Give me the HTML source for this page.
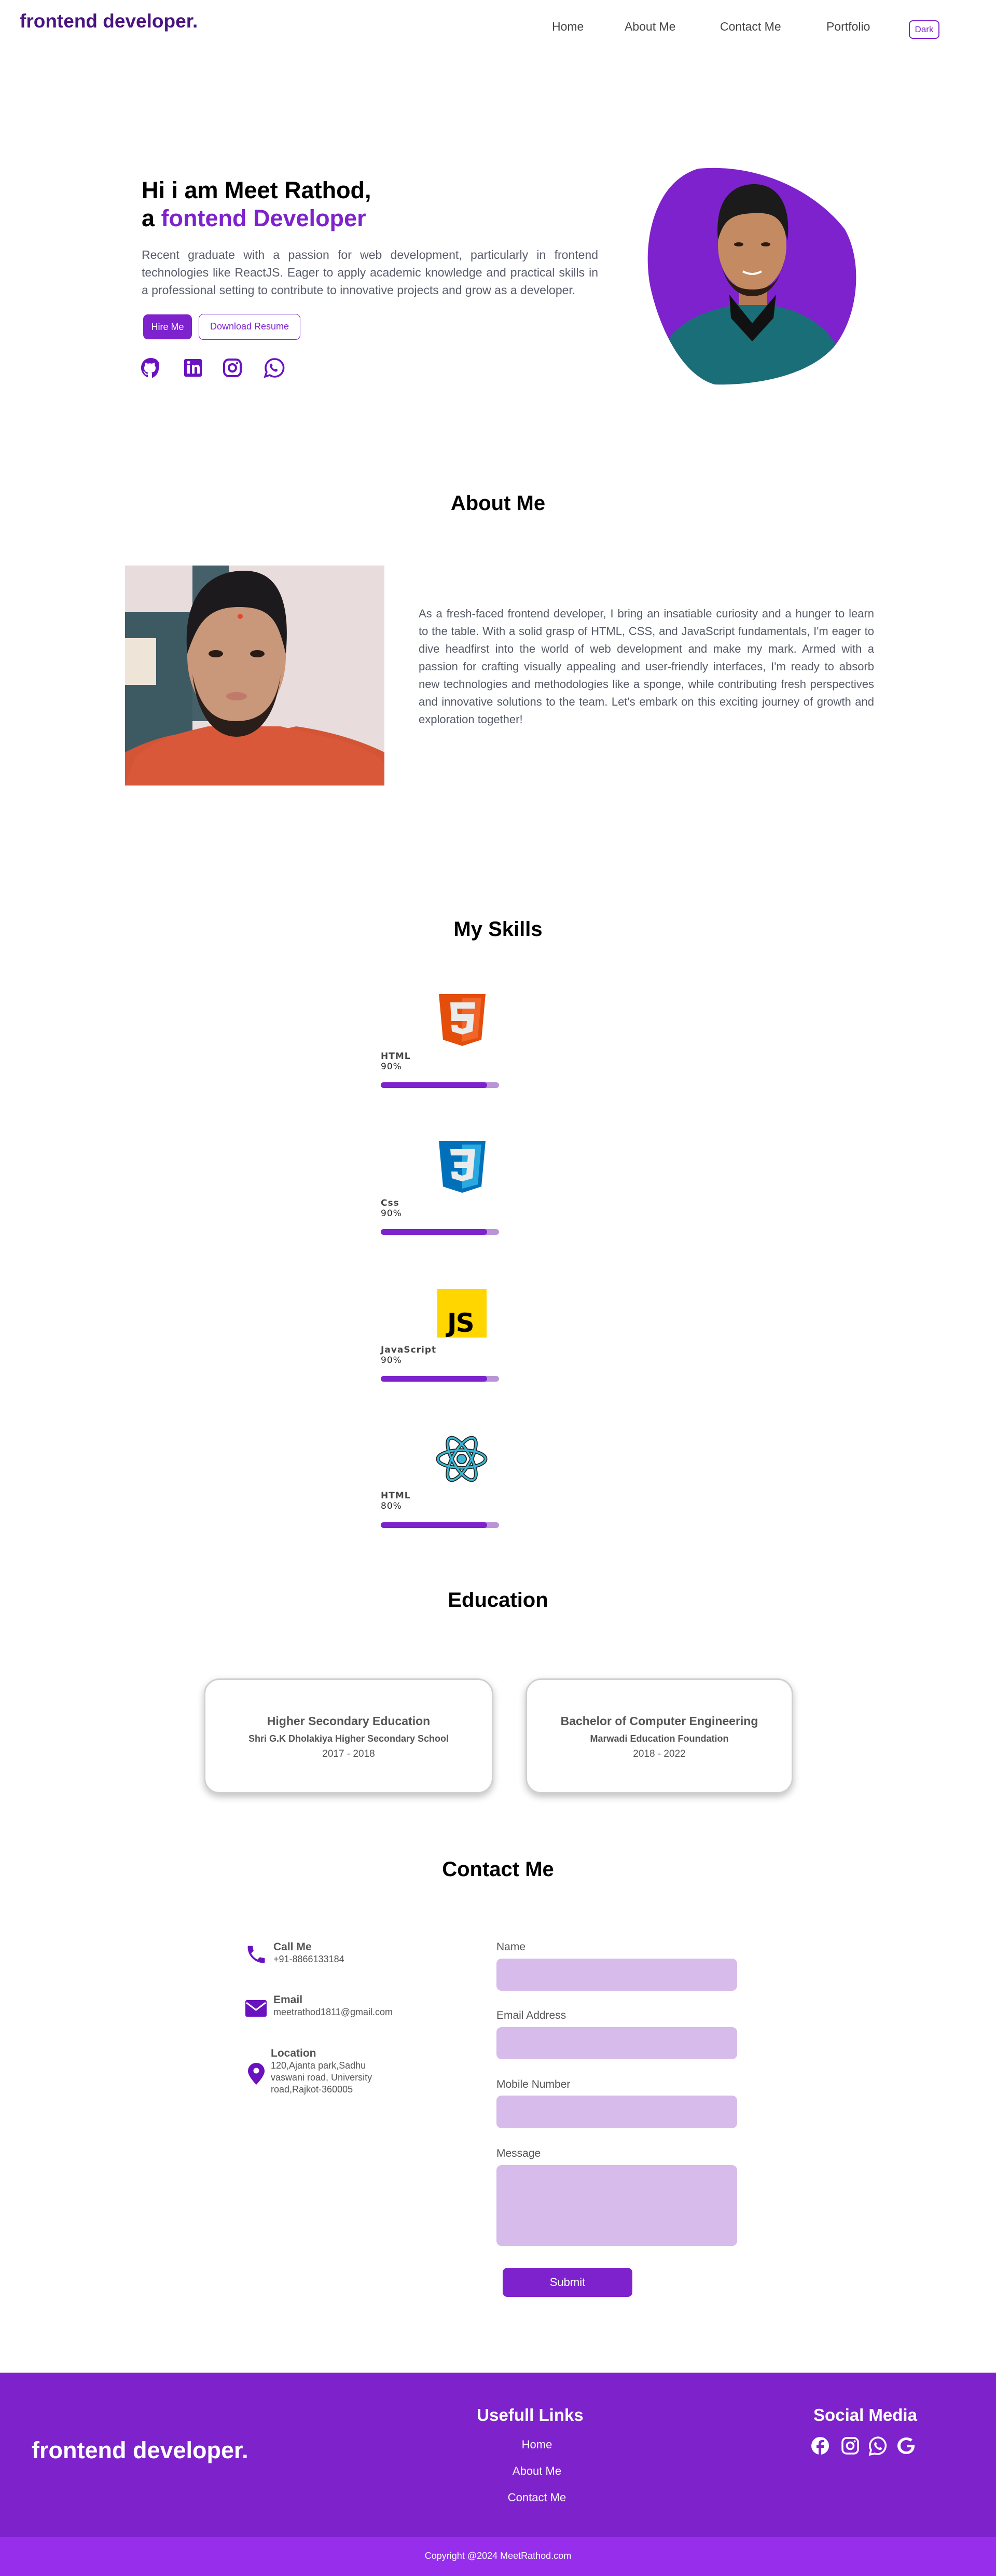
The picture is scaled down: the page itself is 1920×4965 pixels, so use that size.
<!DOCTYPE html>
<html><head><meta charset="utf-8"><style>
*{margin:0;padding:0;box-sizing:border-box}
body{width:1920px;height:4965px;position:relative;background:#fff;font-family:"Liberation Sans",Arial,sans-serif;overflow:hidden}
.a{position:absolute}
.nav{font-size:23px;color:#444;top:38px}
h2{position:absolute;left:0;width:1920px;text-align:center;font-size:40px;font-weight:bold;color:#000}
.sk{position:absolute;left:734px;font-family:"DejaVu Sans",sans-serif;color:#444}
.sk b{display:block;font-size:17px;letter-spacing:1px}
.sk span{display:block;font-size:17px;color:#222;letter-spacing:1px}
.bar{position:absolute;left:734px;width:228px;height:11px;border-radius:6px;background:#b995d8}
.bar i{display:block;width:205px;height:11px;border-radius:6px;background:#7e22ce}
.card{position:absolute;top:3235px;height:222px;border:3px solid #d0d0d0;border-radius:30px;box-shadow:0 6px 14px rgba(0,0,0,.25);text-align:center;color:#555;padding-top:66px}
.card .t{font-size:23px;font-weight:bold}
.card .s{font-size:18px;font-weight:bold;margin-top:10px}
.card .y{font-size:19px;margin-top:8px}
.lbl{position:absolute;left:957px;font-size:21px;color:#555}
.inp{position:absolute;left:957px;width:464px;background:#d7bbea;border-radius:10px}
.ct{position:absolute;left:527px;color:#555}
.ct b{display:block;font-size:21px}
.ct span{display:block;font-size:18px;line-height:23px}
.fl{position:absolute;width:300px;left:885px;text-align:center;color:#fff;font-size:22px}
</style></head><body>

<div class="a" style="left:38px;top:20px;font-size:37px;font-weight:bold;color:#4a1480">frontend developer.</div>
<div class="a nav" style="left:1064px">Home</div>
<div class="a nav" style="left:1204px">About Me</div>
<div class="a nav" style="left:1388px">Contact Me</div>
<div class="a nav" style="left:1593px">Portfolio</div>
<div class="a" style="left:1752px;top:39px;width:59px;height:36px;border:2px solid #7e22ce;border-radius:8px;color:#7e22ce;font-size:17px;text-align:center;line-height:32px">Dark</div>

<div class="a" style="left:273px;top:340px;font-size:45px;font-weight:bold;color:#000;line-height:54px">Hi i am Meet Rathod,<br>a <span style="color:#7e22ce">fontend Developer</span></div>
<div class="a" style="left:273px;top:474px;width:880px;font-size:23px;line-height:34px;color:#5a5d6a;text-align:justify;text-align-last:left">Recent graduate with a passion for web development, particularly in frontend technologies like ReactJS. Eager to apply academic knowledge and practical skills in a professional setting to contribute to innovative projects and grow as a developer.</div>
<div class="a" style="left:276px;top:606px;width:94px;height:48px;background:#7e22ce;border-radius:9px;color:#fff;font-size:18px;text-align:center;line-height:48px">Hire Me</div>
<div class="a" style="left:383px;top:605px;width:196px;height:50px;border:1.5px solid #7e22ce;border-radius:9px;color:#7e22ce;font-size:18px;text-align:center;line-height:47px">Download Resume</div>
<svg class="a" style="left:270px;top:688px" width="280" height="42" viewBox="0 0 280 42" fill="#6a12c0">
<path d="M21 2C10 2 2 10 2 21c0 8 5 15 12 18 1 0 1-.4 1-1v-4c-5 1-6-2-6-2-1-2-2-3-2-3-2-1 0-1 0-1 2 0 3 2 3 2 2 3 4 2 5 2 0-1 1-2 1-2-4-1-8-2-8-9 0-2 1-4 2-5 0-1-1-2 0-5 0 0 2 0 5 2 1-.4 3-.6 4-.6s3 .2 4 .6c3-2 5-2 5-2 1 3 0 4 0 5 1 1 2 3 2 5 0 7-4 8-8 9 1 1 1 2 1 3v6c0 1 0 1 1 1 7-3 12-10 12-18C40 10 32 2 21 2z"/>
<rect x="85" y="4" width="34" height="34" rx="3"/><rect x="91" y="16" width="5" height="16" fill="#fff"/><circle cx="93.5" cy="10.5" r="3" fill="#fff"/><path d="M100 16h5v2c1-2 3-3 5-3 4 0 5 3 5 6v11h-5V22c0-2-1-3-2-3-2 0-3 1-3 3v10h-5z" fill="#fff"/>
<rect x="162" y="5" width="32" height="32" rx="9" fill="none" stroke="#6a12c0" stroke-width="4"/><circle cx="178" cy="21" r="7" fill="none" stroke="#6a12c0" stroke-width="4"/><circle cx="187" cy="12" r="2"/>
<path d="M259 4a17 17 0 0 0-15 25l-3 9 9-3a17 17 0 1 0 9-31z" fill="none" stroke="#6a12c0" stroke-width="3.5"/><path d="M252 13c1-1 2 0 3 2s0 2-1 3c1 3 3 5 6 6 1-1 2-2 3-1s3 2 2 3c-1 2-3 3-5 2-5-2-8-5-10-10 0-2 1-4 2-5z"/>
</svg>

<svg class="a" style="left:1234px;top:323px" width="421" height="420" viewBox="0 0 417 420">
<defs><clipPath id="bl"><path d="M110 2C220-8 330 40 392 118C428 180 420 285 372 345C322 402 220 420 142 418C84 402 40 322 20 240C0 160 18 30 110 2Z"/></clipPath></defs>
<g clip-path="url(#bl)">
<rect width="417" height="420" fill="#7e22ce"/>
<path d="M20 420C30 330 80 290 150 272L214 255L290 275C355 300 390 340 400 420Z" fill="#1a6e78"/>
<path d="M170 245L214 300L260 245L255 290L214 335L173 290Z" fill="#111"/>
<rect x="188" y="200" width="54" height="65" fill="#b57a55"/>
<ellipse cx="214" cy="150" rx="66" ry="88" fill="#c48a62"/>
<path d="M148 140C142 70 168 35 214 32C262 30 290 70 282 140C272 100 260 85 214 88C170 90 158 105 148 140Z" fill="#1b1b1b"/>
<path d="M152 178C164 235 192 248 214 248C236 248 264 235 276 178C268 225 242 235 214 235C188 235 162 225 152 178Z" fill="#2a1c14"/>
<ellipse cx="188" cy="148" rx="9" ry="4" fill="#2a1a12"/><ellipse cx="240" cy="148" rx="9" ry="4" fill="#2a1a12"/>
<path d="M196 200Q214 210 232 200" stroke="#fff" stroke-width="4" fill="none"/>
</g></svg>

<h2 style="top:948px">About Me</h2>
<svg class="a" style="left:241px;top:1090px" width="500" height="424" viewBox="0 0 500 424">
<rect width="500" height="424" fill="#e9dcdc"/>
<rect x="0" y="90" width="130" height="334" fill="#3d5a63"/>
<rect x="0" y="140" width="60" height="90" fill="#efe4d8"/>
<rect x="130" y="0" width="70" height="300" fill="#46606a"/>
<path d="M0 424L0 360C40 340 90 320 160 320L240 330L330 310C400 320 460 340 500 360L500 424Z" fill="#d45535"/>
<path d="M0 424L20 370C60 330 120 320 160 310L300 310C380 330 460 340 500 380L500 424Z" fill="#d9583a"/>
<ellipse cx="215" cy="175" rx="95" ry="130" fill="#c9977a"/>
<path d="M120 170C110 60 160 10 230 10C290 10 320 60 310 170C295 110 285 80 220 80C160 80 140 110 120 170Z" fill="#1c1a1c"/>
<path d="M130 210C140 300 180 330 215 330C250 330 290 300 300 210C290 280 255 300 215 300C175 300 145 280 130 210Z" fill="#2a1e1a"/>
<ellipse cx="175" cy="170" rx="14" ry="7" fill="#2a1a14"/><ellipse cx="255" cy="170" rx="14" ry="7" fill="#2a1a14"/>
<circle cx="222" cy="98" r="5" fill="#e04a2a"/>
<ellipse cx="215" cy="252" rx="20" ry="8" fill="#c07a6a"/>
</svg>
<div class="a" style="left:807px;top:1166px;width:878px;font-size:22px;line-height:34px;color:#555a66;text-align:justify;text-align-last:left">As a fresh-faced frontend developer, I bring an insatiable curiosity and a hunger to learn to the table. With a solid grasp of HTML, CSS, and JavaScript fundamentals, I'm eager to dive headfirst into the world of web development and make my mark. Armed with a passion for crafting visually appealing and user-friendly interfaces, I'm ready to absorb new technologies and methodologies like a sponge, while contributing fresh perspectives and innovative solutions to the team. Let's embark on this exciting journey of growth and exploration together!</div>

<h2 style="top:1769px">My Skills</h2>
<svg class="a" style="left:846px;top:1916px" width="90" height="100" viewBox="0 0 90 100"><path d="M0 0H90L82 88L45 100L8 88Z" fill="#e44d0a"/><path d="M45 7H82L75 84L45 92Z" fill="#f16529"/><path d="M22 16H70L69 28H35L36 38H68L65 72L45 78L25 72L24 59H36L37 64L45 67L53 64L54 52H24Z" fill="#ebebeb"/></svg>
<div class="sk" style="top:2026px"><b>HTML</b><span>90%</span></div>
<div class="bar" style="top:2086px"><i></i></div>
<svg class="a" style="left:846px;top:2199px" width="90" height="100" viewBox="0 0 90 100"><path d="M0 0H90L82 88L45 100L8 88Z" fill="#0170ba"/><path d="M45 7H82L75 84L45 92Z" fill="#29a9df"/><path d="M22 16H70L65 72L45 78L25 72L24 59H36L37 64L45 67L53 64L54 52H30L29 40H55L56 28H23Z" fill="#ebebeb"/></svg>
<div class="sk" style="top:2309px"><b>Css</b><span>90%</span></div>
<div class="bar" style="top:2369px"><i></i></div>
<div class="a" style="left:843px;top:2484px;width:95px;height:94px;background:#ffd600"></div>
<div class="a" style="left:862px;top:2521px;font-size:50px;font-weight:bold;color:#000;font-family:'DejaVu Sans',sans-serif;letter-spacing:-2px">JS</div>
<div class="sk" style="top:2592px"><b>JavaScript</b><span>90%</span></div>
<div class="bar" style="top:2652px"><i></i></div>
<svg class="a" style="left:840px;top:2767px" width="100" height="90" viewBox="0 0 100 90"><g fill="none" stroke="#222" stroke-width="7"><ellipse cx="50" cy="45" rx="46" ry="17"/><ellipse cx="50" cy="45" rx="46" ry="17" transform="rotate(60 50 45)"/><ellipse cx="50" cy="45" rx="46" ry="17" transform="rotate(-60 50 45)"/></g><g fill="none" stroke="#3ab8d4" stroke-width="3.5"><ellipse cx="50" cy="45" rx="46" ry="17"/><ellipse cx="50" cy="45" rx="46" ry="17" transform="rotate(60 50 45)"/><ellipse cx="50" cy="45" rx="46" ry="17" transform="rotate(-60 50 45)"/></g><circle cx="50" cy="45" r="9" fill="#3ab8d4" stroke="#222" stroke-width="2"/></svg>
<div class="sk" style="top:2873px"><b>HTML</b><span>80%</span></div>
<div class="bar" style="top:2934px"><i></i></div>

<h2 style="top:3062px">Education</h2>
<div class="card" style="left:393px;width:558px"><div class="t">Higher Secondary Education</div><div class="s">Shri G.K Dholakiya Higher Secondary School</div><div class="y">2017 - 2018</div></div>
<div class="card" style="left:1013px;width:516px"><div class="t">Bachelor of Computer Engineering</div><div class="s">Marwadi Education Foundation</div><div class="y">2018 - 2022</div></div>

<h2 style="top:3581px">Contact Me</h2>
<svg class="a" style="left:472px;top:3745px" width="44" height="44" viewBox="0 0 24 24" fill="#6a12c0"><path d="M6.6 10.8c1.4 2.8 3.8 5.1 6.6 6.6l2.2-2.2c.3-.3.7-.4 1-.2 1.1.4 2.3.6 3.6.6.6 0 1 .4 1 1V20c0 .6-.4 1-1 1C10.6 21 3 13.4 3 4c0-.6.4-1 1-1h3.5c.6 0 1 .4 1 1 0 1.3.2 2.5.6 3.6.1.3 0 .7-.2 1z"/></svg>
<div class="ct" style="top:3741px"><b>Call Me</b><span>+91-8866133184</span></div>
<svg class="a" style="left:473px;top:3855px" width="41" height="32" viewBox="0 0 41 32"><rect width="41" height="32" rx="3" fill="#6a12c0"/><path d="M2 5L20.5 19L39 5" stroke="#fff" stroke-width="3" fill="none"/></svg>
<div class="ct" style="top:3843px"><b>Email</b><span>meetrathod1811@gmail.com</span></div>
<svg class="a" style="left:478px;top:3976px" width="32" height="42" viewBox="0 0 32 42"><path d="M16 0C7 0 0 7 0 16c0 10 16 26 16 26s16-16 16-26C32 7 25 0 16 0z" fill="#6a12c0"/><circle cx="16" cy="15" r="5.5" fill="#fff"/></svg>
<div class="ct" style="top:3946px;left:522px"><b>Location</b><span>120,Ajanta park,Sadhu<br>vaswani road, University<br>road,Rajkot-360005</span></div>

<div class="lbl" style="top:3741px">Name</div><div class="inp" style="top:3775px;height:62px"></div>
<div class="lbl" style="top:3873px">Email Address</div><div class="inp" style="top:3907px;height:62px"></div>
<div class="lbl" style="top:4006px">Mobile Number</div><div class="inp" style="top:4039px;height:63px"></div>
<div class="lbl" style="top:4139px">Message</div><div class="inp" style="top:4173px;height:156px"></div>
<div class="a" style="left:969px;top:4371px;width:250px;height:56px;background:#7e22ce;border-radius:9px;color:#fff;font-size:22px;text-align:center;line-height:56px">Submit</div>

<div class="a" style="left:0;top:4573px;width:1920px;height:317px;background:#7e22cc"></div>
<div class="a" style="left:0;top:4890px;width:1920px;height:75px;background:#962eec"></div>
<div class="a" style="left:61px;top:4697px;font-size:45px;font-weight:bold;color:#fff">frontend developer.</div>
<div class="fl" style="top:4636px;font-size:33px;font-weight:bold;left:872px">Usefull Links</div>
<div class="fl" style="top:4699px">Home</div>
<div class="fl" style="top:4750px">About Me</div>
<div class="fl" style="top:4801px">Contact Me</div>
<div class="a" style="left:1518px;width:300px;text-align:center;top:4636px;font-size:33px;font-weight:bold;color:#fff">Social Media</div>
<svg class="a" style="left:1563px;top:4695px" width="205" height="38" viewBox="0 0 205 38" fill="#fff">
<circle cx="18" cy="19" r="17"/><path d="M20 37V23h5l1-5h-6v-3c0-2 1-3 3-3h3V8h-4c-5 0-7 3-7 7v3h-4v5h4v14z" fill="#7e22cc"/>
<rect x="61" y="4" width="30" height="30" rx="8" fill="none" stroke="#fff" stroke-width="3.5"/><circle cx="76" cy="19" r="6.5" fill="none" stroke="#fff" stroke-width="3.5"/><circle cx="84.5" cy="10.5" r="2"/>
<path d="M130 3a16 16 0 0 0-14 24l-2 9 9-2a16 16 0 1 0 7-31z" fill="none" stroke="#fff" stroke-width="3.5"/><path d="M124 12c1-1 2 0 3 2s0 2-1 3c1 3 3 5 6 6 1-1 2-2 3-1s3 2 2 3c-1 2-3 3-5 2-5-2-8-5-10-10 0-2 1-4 2-5z"/>
<path d="M200 17h-15v5h9c-1 5-5 8-10 8-6 0-11-5-11-11s5-11 11-11c3 0 6 1 8 3l4-4c-3-3-7-4-12-4-9 0-17 7-17 16s8 16 17 16c9 0 16-6 16-16z"/>
</svg>
<div class="a" style="left:0;width:1920px;text-align:center;top:4916px;font-size:18px;color:#fff">Copyright @2024 MeetRathod.com</div>
</body></html>
